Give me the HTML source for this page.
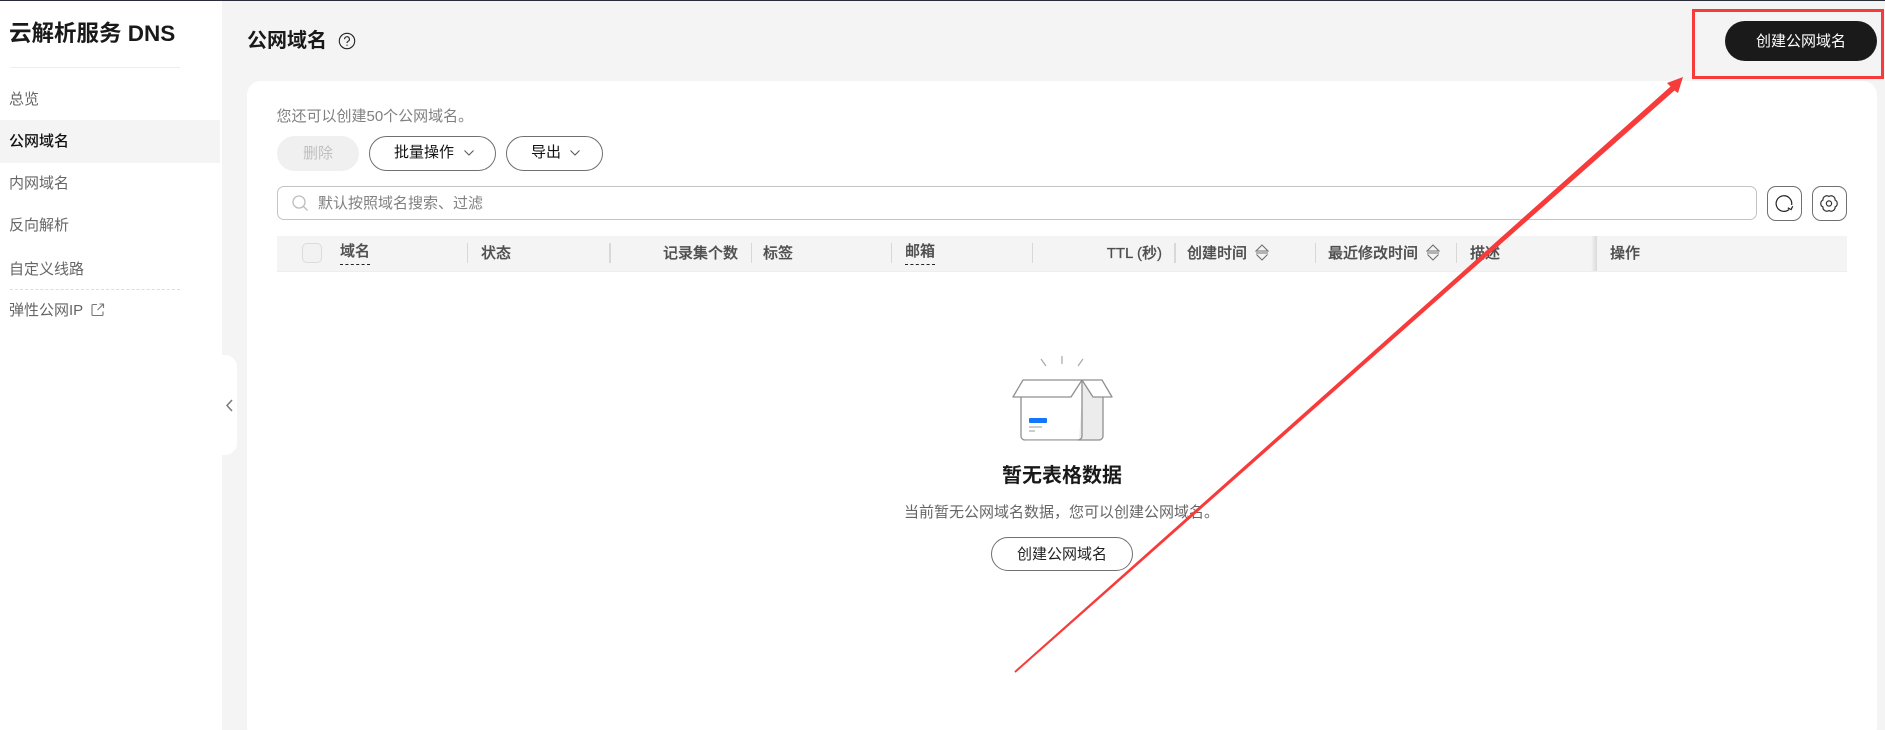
<!DOCTYPE html>
<html><head><meta charset="utf-8"><style>
*{box-sizing:border-box}
html,body{margin:0;padding:0;width:1885px;height:730px;overflow:hidden;background:#f4f4f4}
body{position:relative;font-family:"Liberation Sans","Noto Sans CJK SC",sans-serif;color:#191919;font-size:15px}
.a{position:absolute;white-space:nowrap;line-height:20px}
.nav{left:9px;color:#666}
.th{color:#4f4f4f;font-weight:500;-webkit-text-stroke:.25px #4f4f4f;top:244px}
.sep{position:absolute;top:243px;height:20px;width:1px;background:#d8d8d8}
.btn{position:absolute;background:#fff;border:1px solid #707070;border-radius:18px;display:flex;align-items:center;justify-content:center;line-height:20px;padding-top:1px}
svg{position:absolute;overflow:visible}
</style></head><body>
<div style="position:absolute;left:0;top:0;width:1885px;height:1px;background:#2a2d38"></div>
<div style="position:absolute;left:0;top:1px;width:222px;height:729px;background:#fff"></div>
<div class="a" style="left:9px;top:19px;font-size:22.500px;font-weight:700;line-height:30px">云解析服务 DNS</div>
<div style="position:absolute;left:10px;top:67px;width:170px;height:1px;background:#eee"></div>
<div class="a nav" style="top:90px">总览</div>
<div style="position:absolute;left:0;top:120px;width:220px;height:43px;background:#f4f4f4"></div>
<div class="a" style="left:9px;top:132px;font-weight:500;color:#111">公网域名</div>
<div class="a nav" style="top:174px">内网域名</div>
<div class="a nav" style="top:216px">反向解析</div>
<div class="a nav" style="top:260px">自定义线路</div>
<div style="position:absolute;left:10px;top:289px;width:170px;border-top:1px dashed #ddd"></div>
<div class="a nav" style="top:301px">弹性公网IP</div>
<svg style="left:91px;top:303px" width="14" height="14" viewBox="0 0 14 14" fill="none" stroke="#777" stroke-width="1.100"><path d="M6 1.500H2a1 1 0 0 0-1 1v9a1 1 0 0 0 1 1h9a1 1 0 0 0 1-1V8.500M8.500 1h4v4M12.500 1L6.500 7"/></svg>
<div style="position:absolute;left:222px;top:355px;width:15px;height:100px;background:#fff;border-radius:0 12px 12px 0"></div>
<svg style="left:225px;top:399px" width="9" height="13" fill="none" stroke="#7a7a7a" stroke-width="1.500"><path d="M7 1L2 6.500L7 12"/></svg>

<div class="a" style="left:247px;top:26px;font-size:20px;font-weight:700;line-height:30px">公网域名</div>
<svg style="left:338px;top:32px" width="18" height="18" fill="none" stroke="#222" stroke-width="1.100"><circle cx="9" cy="9" r="7.700"/><path d="M6.600 7.200a2.400 2.400 0 1 1 3.600 2c-.8.500-1.200.900-1.200 1.800"/><path d="M9 12.600v1.200"/></svg>

<div style="position:absolute;left:247px;top:81px;width:1630px;height:660px;background:#fff;border-radius:14px"></div>
<div class="a" style="left:276.500px;top:107px;color:#808080">您还可以创建50个公网域名。</div>
<div class="btn" style="left:277px;top:136px;width:82px;height:35px;background:#f0f0f0;border:0;color:#bfbfbf">删除</div>
<div class="btn" style="left:369px;top:136px;width:127px;height:35px"></div>
<div class="a" style="left:394px;top:143px;color:#111">批量操作</div>
<svg style="left:464px;top:150px" width="10" height="6" fill="none" stroke="#555"><path d="M.5 .5L5 5L9.500 .5"/></svg>
<div class="btn" style="left:506px;top:136px;width:97px;height:35px"></div>
<div class="a" style="left:531px;top:143px;color:#111">导出</div>
<svg style="left:570px;top:150px" width="10" height="6" fill="none" stroke="#555"><path d="M.5 .5L5 5L9.500 .5"/></svg>

<div style="position:absolute;left:277px;top:186px;width:1480px;height:34px;border:1px solid #c4c4c4;border-radius:7px;background:#fff"></div>
<svg style="left:292px;top:195px" width="17" height="17" fill="none" stroke="#bdbdbd" stroke-width="1.300"><circle cx="7" cy="7" r="6"/><path d="M11.500 11.500L15.500 15.500"/></svg>
<div class="a" style="left:318px;top:193px;color:#808080;padding-top:1px">默认按照域名搜索、过滤</div>
<div class="btn" style="left:1767px;top:186px;width:35px;height:35px;border-radius:9px"></div>
<svg style="left:1774px;top:193px" width="21" height="21" fill="none" stroke="#222" stroke-width="1.200"><path d="M15 16.500A7.800 7.800 0 1 1 17.600 12"/><path d="M13.800 14.800l3.300 1.800 1.600-3.400"/></svg>
<div class="btn" style="left:1812px;top:186px;width:35px;height:35px;border-radius:9px"></div>
<svg style="left:1820px;top:194px" width="18" height="19" fill="none" stroke="#333" stroke-width="1.200"><path d="M9 2.500A3.900 3.900 0 0 1 15.060 6A3.900 3.900 0 0 1 15.060 13A3.900 3.900 0 0 1 9 16.500A3.900 3.900 0 0 1 2.940 13A3.900 3.900 0 0 1 2.940 6A3.900 3.900 0 0 1 9 2.500Z"/><circle cx="9" cy="9.500" r="2.600"/></svg>

<div style="position:absolute;left:277px;top:236px;width:1570px;height:36px;background:#f4f4f4;border-bottom:1px solid #eee"></div>
<div style="position:absolute;left:302px;top:243px;width:20px;height:20px;border:1px solid #dcdcdc;border-radius:5px;background:#f2f2f2"></div>
<div class="a th" style="left:340px;top:242px">域名</div>
<div style="position:absolute;left:340px;top:264px;width:30px;border-top:1px dashed #222"></div>
<div class="sep" style="left:467px"></div>
<div class="a th" style="left:481px">状态</div>
<div class="sep" style="left:609px;width:2px"></div>
<div class="a th" style="right:1147px">记录集个数</div>
<div class="sep" style="left:751px"></div>
<div class="a th" style="left:763px">标签</div>
<div class="sep" style="left:891px"></div>
<div class="a th" style="left:905px;top:242px">邮箱</div>
<div style="position:absolute;left:905px;top:264px;width:30px;border-top:1px dashed #222"></div>
<div class="sep" style="left:1032px"></div>
<div class="a th" style="right:723px">TTL (秒)</div>
<div class="sep" style="left:1174px;width:2px"></div>
<div class="a th" style="left:1187px">创建时间</div>
<svg style="left:1255px;top:244px" width="14" height="17" fill="none" stroke="#707070" stroke-width="1.100"><path d="M1 7L7 1L13 7ZM1 9H13M1.500 10.500L7 16L12.500 10.500"/></svg>
<div class="sep" style="left:1315px"></div>
<div class="a th" style="left:1328px">最近修改时间</div>
<svg style="left:1426px;top:244px" width="14" height="17" fill="none" stroke="#707070" stroke-width="1.100"><path d="M1 7L7 1L13 7ZM1 9H13M1.500 10.500L7 16L12.500 10.500"/></svg>
<div class="sep" style="left:1456px"></div>
<div class="a th" style="left:1470px">描述</div>
<div style="position:absolute;left:1591px;top:236px;width:6px;height:35px;background:linear-gradient(90deg,#f4f4f4,#d9d9d9)"></div>
<div class="a th" style="left:1610px">操作</div>

<svg style="left:0;top:0" width="1885" height="730" fill="none">
<g stroke="#a8a8a8" stroke-width="1.200"><path d="M1041 359L1046 366M1062 356V364M1083 359L1078 366"/></g>
<path d="M1083 383H1103V436a4 4 0 0 1-4 4H1079z" fill="#ececec"/>
<g stroke="#8f8f8f" stroke-width="1.300" stroke-linejoin="round">
<path d="M1021 397V436a4 4 0 0 0 4 4H1099a4 4 0 0 0 4-4V397"/>
<path d="M1082 380V436a4 4 0 0 1-4 4"/>
<path d="M1023 380H1082L1071 397H1013Z" fill="#fff"/>
<path d="M1082 380H1102L1112 397H1093Z" fill="#fff"/>
</g>
<path d="M1025 440.500H1078" stroke="#c8c8c8"/>
<rect x="1029" y="418" width="18" height="5" rx="1" fill="#1476ff"/>
<path d="M1029 427H1042M1029 431H1035" stroke="#999" stroke-width="1.100"/>
</svg>

<div class="a" style="left:1002px;top:461px;width:120px;font-size:20px;font-weight:700;line-height:30px">暂无表格数据</div>
<div class="a" style="left:904px;top:503px;color:#666">当前暂无公网域名数据，您可以创建公网域名。</div>
<div class="btn" style="left:991px;top:537px;width:142px;height:34px;color:#222;padding-top:2px">创建公网域名</div>

<div class="btn" style="left:1725px;top:21px;width:152px;height:40px;border:0;border-radius:20px;background:#1a1a1a;color:#fff">创建公网域名</div>

<svg style="left:0;top:0" width="1885" height="730">
<rect x="1693.500" y="10.500" width="189" height="67" fill="none" stroke="#f73b3b" stroke-width="3"/>
<polygon fill="#f73b3b" points="1683,77 1667,83 1670.500,86.500 1014.300,671.300 1015.700,672.700 1674.500,90.500 1678,93"/>
</svg>
</body></html>
